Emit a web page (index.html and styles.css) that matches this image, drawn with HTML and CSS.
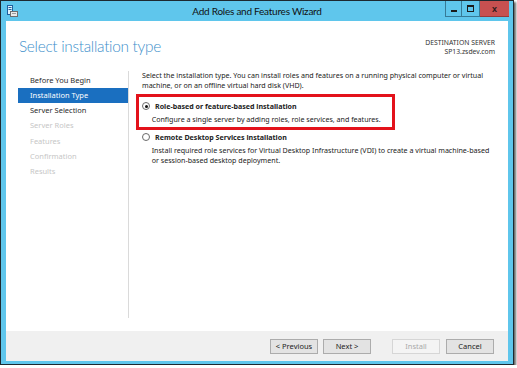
FILE: index.html
```html
<!DOCTYPE html>
<html lang="en">
<head>
  <meta charset="UTF-8" />
  <title>Add Roles and Features Wizard</title>
  <link rel="stylesheet" href="styles.css">
</head>
<body>
  <div class="window">
    <!-- Title bar -->
    <div class="titlebar">
      <svg class="app-icon" width="11" height="12" viewBox="0 0 11 12">
        <rect x="0.5" y="0.5" width="5" height="9" fill="#dff3fb" stroke="#1f5f9e" />
        <rect x="1.5" y="2" width="3" height="1" fill="#1f5f9e" />
        <rect x="1.5" y="4" width="3" height="1" fill="#1f5f9e" />
        <rect x="3.5" y="6.5" width="7" height="5" fill="#e9e9e9" stroke="#6d6d6d" />
        <rect x="5" y="8" width="4" height="1" fill="#9a9a9a" />
      </svg>
      <div class="title">Add Roles and Features Wizard</div>
      <div class="controls">
        <span class="ctl ctl-min"><i></i></span>
        <span class="ctl ctl-max"><i></i></span>
        <span class="ctl ctl-close">x</span>
      </div>
    </div>

    <div class="client">
      <div class="header">
        <h1>Select installation type</h1>
        <div class="dest">DESTINATION SERVER<br>SP13.zsdev.com</div>
      </div>

      <div class="main">
        <ul class="steps">
          <li class="done">Before You Begin</li>
          <li class="current">Installation Type</li>
          <li class="done">Server Selection</li>
          <li>Server Roles</li>
          <li>Features</li>
          <li>Confirmation</li>
          <li>Results</li>
        </ul>

        <div class="pane">
          <p class="intro">Select the installation type. You can install roles and features on a running physical computer or virtual<br>machine, or on an offline virtual hard disk (VHD).</p>

          <div class="option highlighted">
            <div class="option-label"><span class="radio checked"></span>Role-based or feature-based installation</div>
            <div class="option-desc">Configure a single server by adding roles, role services, and features.</div>
            <div class="callout"></div>
          </div>

          <div class="option">
            <div class="option-label"><span class="radio"></span>Remote Desktop Services installation</div>
            <div class="option-desc">Install required role services for Virtual Desktop Infrastructure (VDI) to create a virtual machine-based<br>or session-based desktop deployment.</div>
          </div>
        </div>
      </div>

      <div class="footer">
        <button class="btn">&lt; Previous</button>
        <button class="btn">Next &gt;</button>
        <button class="btn btn-install" disabled>Install</button>
        <button class="btn">Cancel</button>
      </div>
    </div>
  </div>
</body>
</html>
```

FILE: styles.css
```css
body {
  margin: 0;
  background: #fff;
  font-family: "Segoe UI", "Noto Sans", "Liberation Sans", sans-serif;
}
/* Window frame */
.window {
  width: 512px;
  height: 363px;
  border: 1px solid #1d2930;
  background: #5fc6ec;
  box-shadow: 2px 2px 2px rgba(0,0,0,0.6);
  display: flex;
  flex-direction: column;
}
.titlebar {
  height: 20px;
  display: grid;
  grid-template-columns: 1fr auto 1fr;
  align-items: start;
}
.app-icon {
  margin: 4px 0 0 6px;
}
.title {
  font-family: "Lato", "Noto Sans", sans-serif;
  font-size: 10px;
  letter-spacing: -0.25px;
  line-height: 20px;
  color: #111;
}
.controls {
  justify-self: end;
  display: flex;
  margin-right: 4px;
  height: 16px;
}
.ctl {
  height: 16px;
  box-sizing: border-box;
  display: flex;
  align-items: center;
  justify-content: center;
}
.ctl-min, .ctl-max {
  width: 17px;
  border: 1px solid rgba(20,60,80,0.55);
  border-top: none;
}
.ctl-max {
  width: 18px;
  border-left: none;
}
.ctl-min i {
  width: 6px;
  height: 2px;
  background: #1b1b1b;
  margin-top: 4px;
}
.ctl-max i {
  width: 5px;
  height: 4px;
  border: 1px solid #1b1b1b;
  border-top-width: 2px;
}
.ctl-close {
  width: 29px;
  background: #c75050;
  color: #2a1a1a;
  font: bold 9px "Liberation Sans", sans-serif;
  border-bottom: 1px solid rgba(80,20,20,0.4);
}
/* Client area */
.client {
  flex: 1;
  margin: 0 5px 3px;
  background: #fff;
  display: flex;
  flex-direction: column;
}
.header {
  height: 50px;
  display: flex;
  justify-content: space-between;
  padding: 0 13px;
}
h1 {
  margin: 15px 0 0;
  font-family: "Lato", "Open Sans", sans-serif;
  font-size: 15.4px;
  font-weight: 300;
  letter-spacing: -0.3px;
  line-height: 20px;
  color: #3d8fcb;
}
.dest {
  margin-top: 17px;
  font-size: 6.8px;
  line-height: 9px;
  text-align: right;
  color: #333;
}
.main {
  flex: 1;
  display: flex;
  padding: 0 0 13px 12px;
}
.steps {
  width: 110px;
  margin: 0;
  padding: 1.5px 0 0;
  list-style: none;
}
.steps li {
  height: 15.3px;
  line-height: 15.3px;
  padding-left: 12px;
  font-size: 7.5px;
  color: #c6c6c6;
}
.steps li.done {
  color: #2b2b2b;
}
.steps li.current {
  background: #1a6fc0;
  color: #fff;
}
.pane {
  flex: 1;
  border-left: 1px solid #dadada;
  padding: 0 6px 0 13px;
  font-size: 7.1px;
  color: #222;
}
.intro {
  margin: 0;
  line-height: 9.5px;
  white-space: nowrap;
}
.option {
  position: relative;
  margin-top: 10px;
}
.option + .option {
  margin-top: 7.4px;
}
.option-label {
  display: flex;
  align-items: center;
  font-weight: bold;
  line-height: 12px;
}
.option-desc {
  margin-top: 1.6px;
  padding-left: 9.7px;
  line-height: 10px;
  white-space: nowrap;
}
.radio {
  width: 8px;
  height: 8px;
  box-sizing: border-box;
  border: 1px solid #6a6a6a;
  border-radius: 50%;
  background: #fff;
  margin-right: 5px;
  display: flex;
  align-items: center;
  justify-content: center;
}
.radio.checked::after {
  content: "";
  width: 3px;
  height: 3px;
  border-radius: 50%;
  background: #111;
}
/* Red annotation box drawn over the first option */
.callout {
  position: absolute;
  left: -6px;
  top: -5.7px;
  width: 259px;
  height: 36px;
  box-sizing: border-box;
  border: 3px solid #e3121b;
}
/* Footer buttons */
.footer {
  height: 30px;
  background: #f0f0f0;
  display: flex;
  align-items: center;
  justify-content: flex-end;
  padding-right: 14px;
}
.btn {
  width: 48px;
  height: 15px;
  margin: 0 0 0 5px;
  padding: 0;
  font-family: inherit;
  font-size: 7.5px;
  color: #222;
  background: #e3e3e3;
  border: 1px solid #acacac;
  border-radius: 0;
}
.btn-install {
  margin-left: 21px;
  color: #a9a9a9;
  background: #f4f4f4;
  border-color: #d6d6d6;
}
.btn-install + .btn {
  margin-left: 6px;
}
```
